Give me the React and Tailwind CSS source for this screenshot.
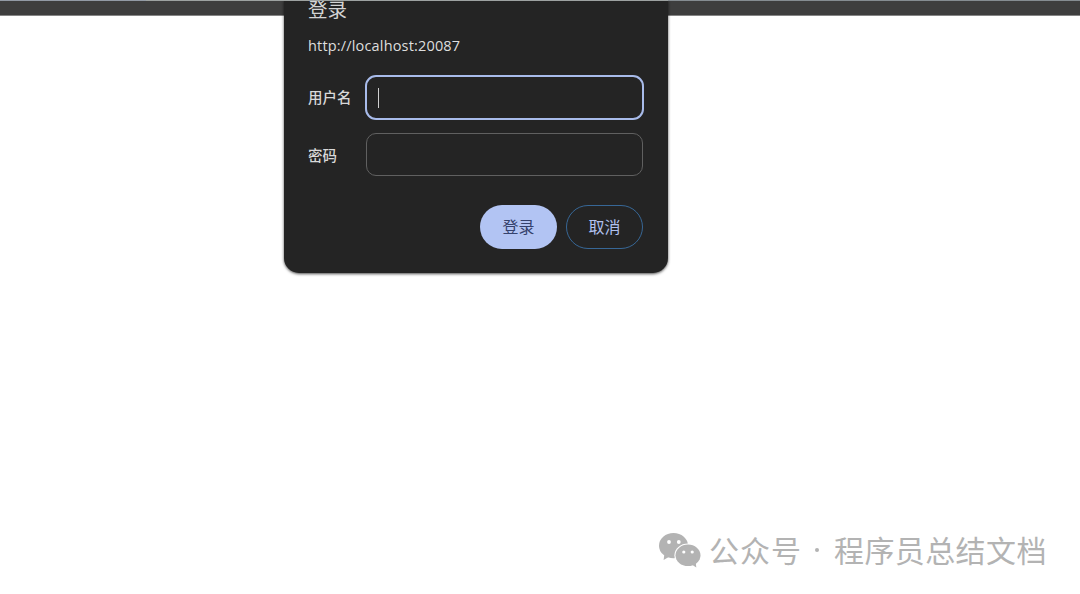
const WeChatIcon = () => (
  <svg width="44" height="38" viewBox="0 0 44 38" className="shrink-0 fill-[#b3b3b3]">
    <path d="M6.5 22 L5.6 29 L11.5 25.5 Z" />
    <ellipse cx="15.5" cy="14.7" rx="14.5" ry="12.6" />
    <circle cx="11" cy="11" r="1.9" fill="white" />
    <circle cx="20.8" cy="11" r="1.9" fill="white" />
    <ellipse cx="30" cy="24.3" rx="13.6" ry="11.9" fill="white" />
    <path d="M33 33 L38.3 36.4 L37.6 30 Z" />
    <ellipse cx="30" cy="24.3" rx="12.5" ry="10.8" />
    <circle cx="25.8" cy="21" r="1.6" fill="white" />
    <circle cx="34.2" cy="21" r="1.6" fill="white" />
  </svg>
);

const Field = ({ label, focused }) => (
  <label className="flex h-[45px] items-center text-[14.5px] font-medium text-[#d8d8d8]">
    <span className={focused ? 'w-[57px] shrink-0 pb-[2px] whitespace-nowrap' : 'w-[57px] shrink-0 whitespace-nowrap'}>
      {label}
    </span>
    {focused ? (
      <span className="flex h-[45px] w-[279px] items-center rounded-[11px] border-2 border-[#a8bbea] pl-[11px]">
        <span className="h-5 w-px bg-[#d0d0d0]" />
      </span>
    ) : (
      <span className="ml-px h-[43px] w-[277px] rounded-[10px] border border-[#606060]" />
    )}
  </label>
);

const LoginDialog = () => (
  <div className="absolute top-0 left-[284px] h-[273px] w-[384px] rounded-b-[15px] bg-[#242424] pl-6 shadow-[0_1px_3px_rgba(0,0,0,0.7)]">
    <h1 className="-mt-[6px] h-[30px] text-[19.5px] leading-[30px] text-[#d4d4d4]">登录</h1>
    <p className="mt-3 h-5 font-['Open_Sans','Noto_Sans_CJK_SC',sans-serif] text-[14.5px] leading-5 font-medium tracking-[0.17px] text-[#dedede]">
      http://localhost:20087
    </p>
    <div className="mt-[19px] flex flex-col gap-3">
      <Field label="用户名" focused />
      <Field label="密码" />
    </div>
    <div className="mt-7 flex gap-[9px] pl-[172px] text-[16px]">
      <button className="h-11 w-[77px] rounded-full bg-[#b2c4f3] pb-[3px] text-[#35426d]">登录</button>
      <button className="h-11 w-[77px] rounded-full border border-[#376796] pb-[3px] text-[#b0c1ef]">取消</button>
    </div>
  </div>
);

const Watermark = () => (
  <div className="mt-auto mb-[23px] ml-[658px] flex h-[42px] items-center whitespace-nowrap text-[30px] leading-[42px] text-[#b3b3b3]">
    <WeChatIcon />
    <span className="ml-[7px] w-[93px] pb-[3px] tracking-[1px]">公众号</span>
    <span className="flex w-8 justify-center">
      <span className="mr-[3px] size-1 rounded-full bg-[#b3b3b3]" />
    </span>
    <span className="pb-[3px] tracking-[0.4px]">程序员总结文档</span>
  </div>
);

export default function App() {
  return (
    <main className="relative flex h-[594px] w-[1080px] flex-col overflow-hidden bg-white font-['Noto_Sans_CJK_SC',sans-serif]">
      <header className="h-4 border-b border-b-[#858585] bg-[#3e3e3e]" />
      <LoginDialog />
      <div className="absolute top-0 left-0 flex h-px w-full bg-[#9da2a1]">
        <span className="w-[146px] bg-[#929aa5]" />
        <span className="flex-1" />
        <span className="w-[412px] bg-[#858c91]" />
      </div>
      <Watermark />
    </main>
  );
}
